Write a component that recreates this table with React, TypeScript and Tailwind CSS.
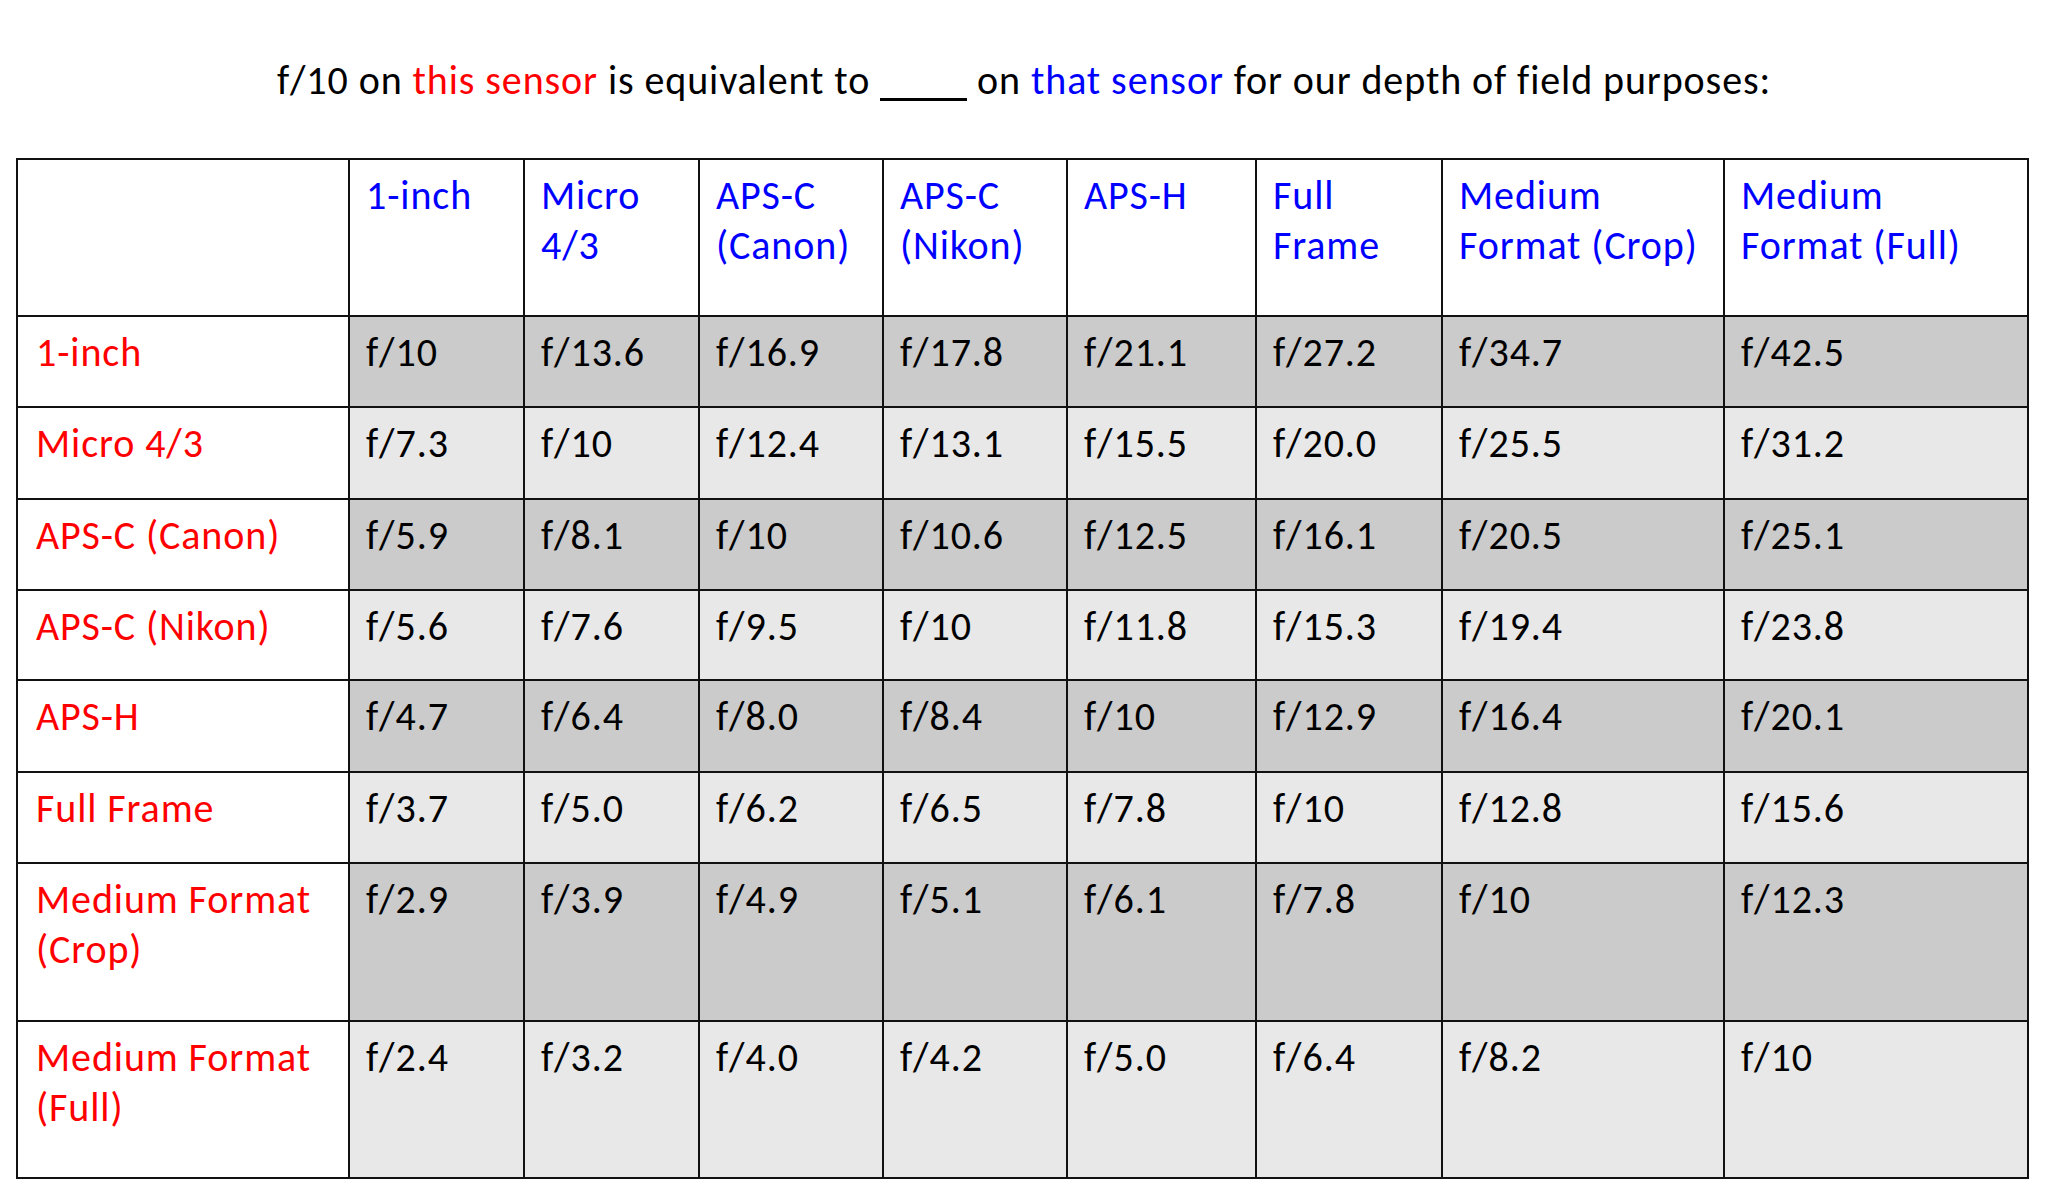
import React from "react";

const headerLines: string[][] = [
  ["1-inch"],
  ["Micro", "4/3"],
  ["APS-C", "(Canon)"],
  ["APS-C", "(Nikon)"],
  ["APS-H"],
  ["Full", "Frame"],
  ["Medium", "Format (Crop)"],
  ["Medium", "Format (Full)"],
];

const rows: { label: string[]; values: string[] }[] = [
  { label: ["1-inch"], values: ["f/10", "f/13.6", "f/16.9", "f/17.8", "f/21.1", "f/27.2", "f/34.7", "f/42.5"] },
  { label: ["Micro 4/3"], values: ["f/7.3", "f/10", "f/12.4", "f/13.1", "f/15.5", "f/20.0", "f/25.5", "f/31.2"] },
  { label: ["APS-C (Canon)"], values: ["f/5.9", "f/8.1", "f/10", "f/10.6", "f/12.5", "f/16.1", "f/20.5", "f/25.1"] },
  { label: ["APS-C (Nikon)"], values: ["f/5.6", "f/7.6", "f/9.5", "f/10", "f/11.8", "f/15.3", "f/19.4", "f/23.8"] },
  { label: ["APS-H"], values: ["f/4.7", "f/6.4", "f/8.0", "f/8.4", "f/10", "f/12.9", "f/16.4", "f/20.1"] },
  { label: ["Full Frame"], values: ["f/3.7", "f/5.0", "f/6.2", "f/6.5", "f/7.8", "f/10", "f/12.8", "f/15.6"] },
  { label: ["Medium Format", "(Crop)"], values: ["f/2.9", "f/3.9", "f/4.9", "f/5.1", "f/6.1", "f/7.8", "f/10", "f/12.3"] },
  { label: ["Medium Format", "(Full)"], values: ["f/2.4", "f/3.2", "f/4.0", "f/4.2", "f/5.0", "f/6.4", "f/8.2", "f/10"] },
];

export default function App() {
  return (
    <div
      className="w-[2048px] h-[1199px] bg-white text-black overflow-hidden tracking-[0.9px]"
      style={{ fontFamily: 'Calibri, Carlito, Lato, "Liberation Sans", sans-serif' }}
    >
      <div className="pt-[56px] h-[158px] text-center text-[40px] leading-[50px]">
        <span>f/10 on </span>
        <span className="text-[#ff0000]">this sensor</span>
        <span> is equivalent to </span>
        <span className="inline-block w-[87px] h-[10px] border-b-[3px] border-black mb-[-7px]"></span>
        <span> on </span>
        <span className="text-[#0000ff]">that sensor</span>
        <span> for our depth of field purposes:</span>
      </div>
      <div className="ml-[16px] w-[2013px] grid grid-cols-[330px_173px_173px_182px_182px_187px_184px_280px_302px] grid-rows-[155px_89px_90px_89px_88px_90px_89px_156px_155px] gap-[2px] p-[2px] bg-[#111111] text-[40px] leading-[50px]">
        <div className="bg-white"></div>
        {headerLines.map((lines, i) => (
          <div key={i} className="bg-white pl-[16px] pt-[11px] text-[#0000ff]">
            {lines.map((l, j) => (
              <div key={j} className="whitespace-nowrap">{l}</div>
            ))}
          </div>
        ))}
        {rows.map((r, ri) => {
          const bg = ri % 2 === 0 ? "bg-[#cbcbcb]" : "bg-[#e8e8e8]";
          return (
            <React.Fragment key={ri}>
              <div className="bg-white pl-[18px] pt-[11px] text-[#ff0000]">
                {r.label.map((l, j) => (
                  <div key={j} className="whitespace-nowrap">{l}</div>
                ))}
              </div>
              {r.values.map((v, vi) => (
                <div key={vi} className={`${bg} pl-[16px] pt-[11px] whitespace-nowrap`}>
                  {v}
                </div>
              ))}
            </React.Fragment>
          );
        })}
      </div>
    </div>
  );
}
